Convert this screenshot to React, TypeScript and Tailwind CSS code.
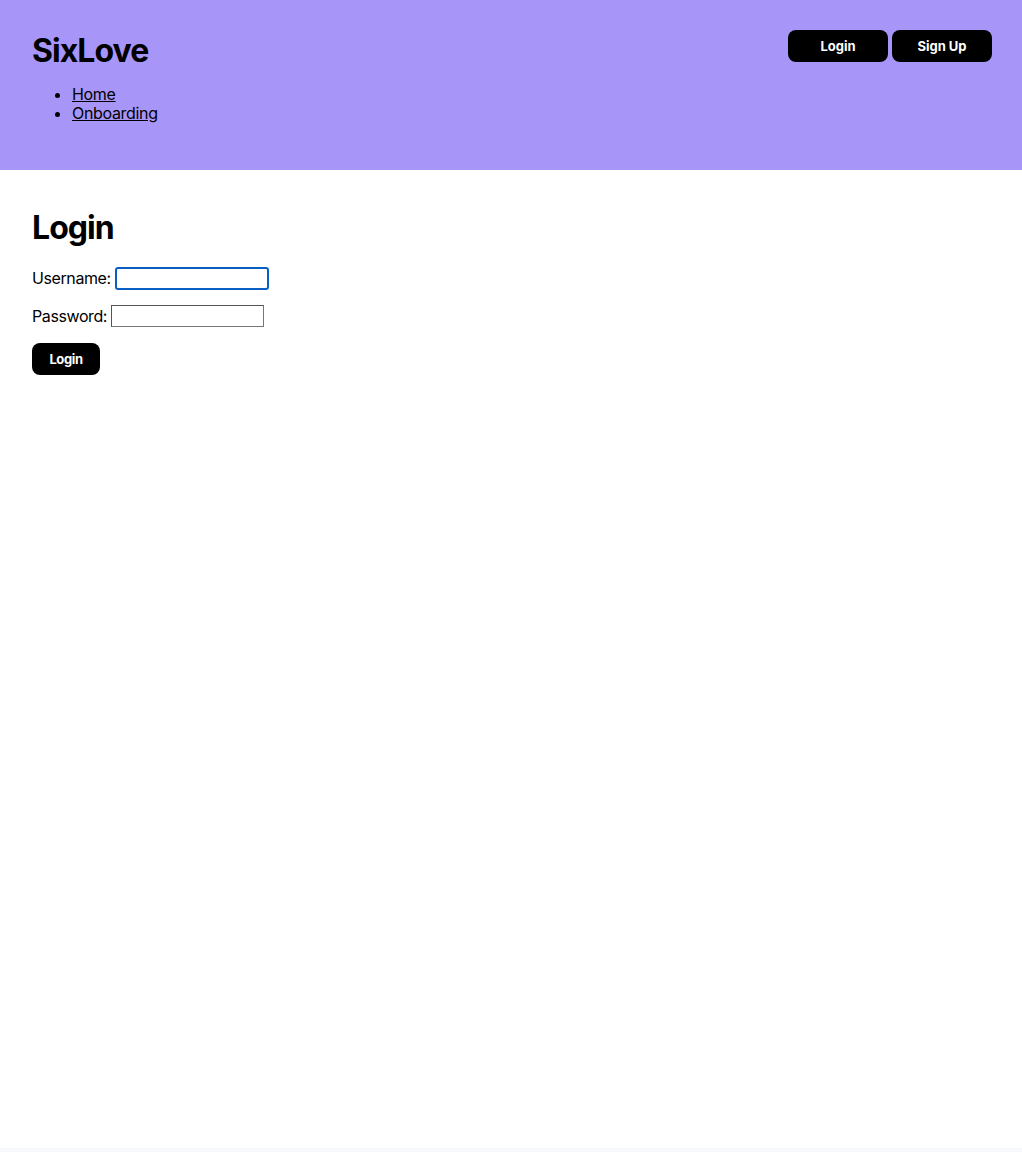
import React, { useState } from "react";

export default function App() {
  const [username, setUsername] = useState("");
  const [password, setPassword] = useState("");

  return (
    <div className="min-h-[1152px] bg-[#f7f8fc] font-['Inter',sans-serif] text-black">
      <div className="min-h-[1148px] bg-white">
        {/* Header */}
        <header className="bg-[#a796f8] px-8 pt-[30px] pb-[47px] flex justify-between items-start">
          <div>
            <h1 className="text-[32px] leading-[39px] font-bold tracking-[-0.03em] mt-[1px] mb-[15px]">SixLove</h1>
            <ul className="list-disc pl-10 text-base leading-[19px] tracking-[-0.02em]">
              <li>
                <a href="#" className="underline">Home</a>
              </li>
              <li>
                <a href="#" className="underline">Onboarding</a>
              </li>
            </ul>
          </div>
          <div className="flex gap-1 -mr-0.5">
            <button className="w-[100px] h-8 pt-[2px] bg-black text-white text-[13px] font-bold rounded-lg">Login</button>
            <button className="w-[100px] h-8 pt-[2px] bg-black text-white text-[13px] font-bold rounded-lg">Sign Up</button>
          </div>
        </header>

        {/* Login form */}
        <main className="px-8 pt-[38px]">
          <h2 className="text-[32px] leading-[39px] font-bold tracking-[-0.03em] mb-5">Login</h2>
          <form className="flex flex-col gap-4 items-start tracking-[-0.025em]" onSubmit={(e) => e.preventDefault()}>
            <label className="flex items-center h-[22px] text-base">
              Username:
              <input
                type="text"
                value={username}
                onChange={(e) => setUsername(e.target.value)}
                className="ml-[4px] w-[154px] h-[23px] border-2 border-[#0a5fc5] rounded-[3px] outline-none px-[2px]"
              />
            </label>
            <label className="flex items-center h-[22px] text-base">
              Password:
              <input
                type="password"
                value={password}
                onChange={(e) => setPassword(e.target.value)}
                className="ml-[4px] w-[153px] h-[22px] border border-[#767676] border-t-[#555] border-l-[#555] outline-none px-[2px]"
              />
            </label>
            <button type="submit" className="w-[68px] h-8 pt-[2px] bg-black text-white text-[13px] font-bold rounded-lg">
              Login
            </button>
          </form>
        </main>
      </div>
    </div>
  );
}
